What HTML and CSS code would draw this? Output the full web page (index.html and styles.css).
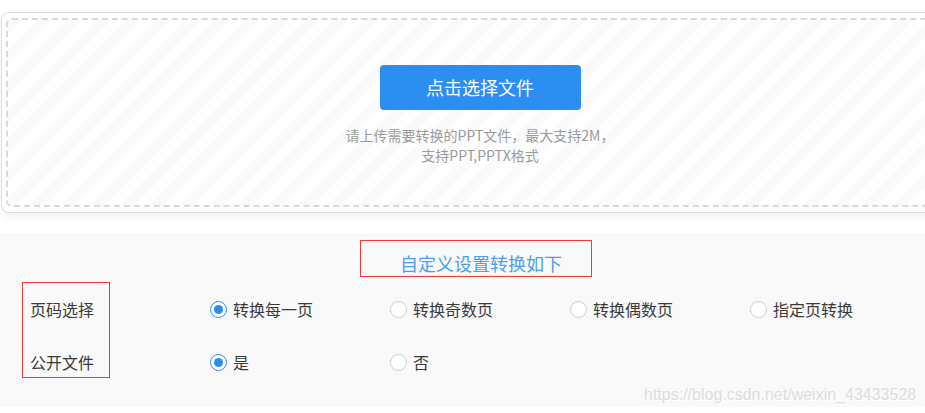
FILE: index.html
```html
<!DOCTYPE html>
<html lang="zh-CN">
<head>
<meta charset="utf-8">
<title>PPT转换</title>
<link rel="stylesheet" href="styles.css">
</head>
<body>
<div class="page">
  <div class="upload-card">
    <div class="drop-zone">
      <button class="pick-btn" type="button">点击选择文件</button>
      <p class="hint">请上传需要转换的PPT文件，最大支持2M，<br>支持PPT,PPTX格式</p>
    </div>
  </div>

  <div class="settings">
    <div class="heading-wrap">
      <span class="heading">自定义设置转换如下</span>
    </div>
    <div class="form">
      <div class="labels">
        <div class="label">页码选择</div>
        <div class="label">公开文件</div>
      </div>
      <div class="fields">
        <div class="radio-row">
          <label class="option"><span class="radio checked"></span><span class="opt-text">转换每一页</span></label>
          <label class="option"><span class="radio"></span><span class="opt-text">转换奇数页</span></label>
          <label class="option"><span class="radio"></span><span class="opt-text">转换偶数页</span></label>
          <label class="option"><span class="radio"></span><span class="opt-text">指定页转换</span></label>
        </div>
        <div class="radio-row">
          <label class="option"><span class="radio checked"></span><span class="opt-text">是</span></label>
          <label class="option"><span class="radio"></span><span class="opt-text">否</span></label>
        </div>
      </div>
    </div>
    <div class="watermark">https://blog.csdn.net/weixin_43433528</div>
  </div>
</div>
</body>
</html>
```

FILE: styles.css
```css
html, body {
  margin: 0;
  padding: 0;
  background: #fff;
  overflow: hidden;
}

body {
  font-family: "Noto Sans CJK SC", "Noto Sans", sans-serif;
  color: #333;
}

.page {
  width: 960px;
  padding-top: 12px;
}

.upload-card {
  box-sizing: border-box;
  margin-left: 1px;
  width: 958px;
  height: 201px;
  padding: 5px 4px;
  border: 1px solid #dedede;
  border-radius: 8px;
  background: #fff;
  box-shadow: 0 4px 8px rgba(0, 0, 0, 0.06);
}

.drop-zone {
  box-sizing: border-box;
  height: 100%;
  border: 2px dashed #d8d8d8;
  border-radius: 6px;
  padding-top: 45px;
  display: flex;
  flex-direction: column;
  align-items: center;
  background: repeating-linear-gradient(135deg, #fafafa 0, #fafafa 10px, #ffffff 10px, #ffffff 21px);
}

.pick-btn {
  width: 201px;
  height: 45px;
  border: none;
  border-radius: 4px;
  background: #2b8ef0;
  color: #fff;
  font-family: inherit;
  font-size: 18px;
  line-height: 45px;
  padding: 0;
  cursor: pointer;
}

.hint {
  margin: 15px 0 0;
  text-align: center;
  font-size: 14px;
  line-height: 20px;
  color: #9a9a9a;
}

.settings {
  position: relative;
  margin-top: 20px;
  height: 174px;
  padding-top: 7px;
  box-sizing: border-box;
  background: #f9f9f9;
}

.heading-wrap {
  text-align: center;
  width: 958px;
}

.heading {
  display: inline-block;
  box-sizing: border-box;
  height: 37px;
  margin-left: -6px;
  padding: 0 29px 0 39px;
  border: 1px solid #f23a3a;
  font-size: 18px;
  line-height: 45px;
  color: #4aa0ea;
}

.form {
  display: flex;
  margin-top: 5px;
}

.labels {
  box-sizing: border-box;
  width: 88px;
  margin-left: 22px;
  padding: 16px 0 5px 7px;
  border: 1px solid #f23a3a;
  display: flex;
  flex-direction: column;
  gap: 33px;
}

.label {
  font-size: 16px;
  line-height: 20px;
  color: #3a3a3a;
}

.fields {
  margin-left: 100px;
  padding-top: 17px;
  display: flex;
  flex-direction: column;
  gap: 33px;
}

.radio-row {
  display: flex;
  height: 20px;
}

.option {
  width: 180px;
  display: flex;
  align-items: center;
  font-size: 16px;
  line-height: 20px;
  color: #3a3a3a;
}

.radio {
  box-sizing: border-box;
  width: 17px;
  height: 17px;
  border: 1px solid #cccccc;
  border-radius: 50%;
  background: #fff;
  margin-right: 6px;
  display: flex;
  align-items: center;
  justify-content: center;
  flex: none;
}

.radio.checked {
  border-color: #2d8cf0;
}

.radio.checked::after {
  content: "";
  width: 9px;
  height: 9px;
  border-radius: 50%;
  background: #2d8cf0;
}

.watermark {
  position: absolute;
  left: 644px;
  bottom: 3px;
  font-family: "Liberation Sans", Arial, sans-serif;
  font-size: 16px;
  line-height: 18px;
  color: #dcdcdc;
  text-shadow: 1px 1px 0 #fff;
  white-space: nowrap;
}
```
